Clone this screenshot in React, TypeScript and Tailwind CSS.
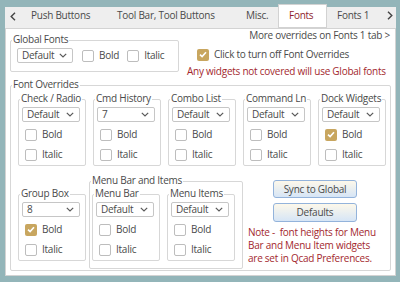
import type { ReactNode } from "react";

const Chevron = () => (
  <svg width="8" height="5" viewBox="0 0 8 5" className="shrink-0">
    <polyline points="0.8,0.8 4,4 7.2,0.8" fill="none" stroke="#5a5a5a" strokeWidth="1.2" />
  </svg>
);

function Combo({ value, w }: { value: string; w: string }) {
  return (
    <div className={`${w} h-[15px] flex items-center justify-between pl-[4px] pr-[5px] bg-white border border-[#c6c6c6] rounded-[2px] leading-[13px]`}>
      <span>{value}</span>
      <Chevron />
    </div>
  );
}

function Check({ label, checked = false }: { label: string; checked?: boolean }) {
  return (
    <div className="flex items-center gap-[5px] leading-[13px]">
      {checked ? (
        <div className="w-[12px] h-[12px] rounded-[2px] bg-[#c8a65f] flex items-center justify-center shrink-0">
          <svg width="8" height="7" viewBox="0 0 8 7">
            <polyline points="1,3.6 3.1,5.6 7,1.2" fill="none" stroke="#ffffff" strokeWidth="1.6" />
          </svg>
        </div>
      ) : (
        <div className="w-[12px] h-[12px] rounded-[2px] bg-white border border-[#bdbdbd] shrink-0" />
      )}
      <span className="whitespace-nowrap">{label}</span>
    </div>
  );
}

function Group({ title, className, children }: { title: string; className: string; children?: ReactNode }) {
  return (
    <div className={`border border-[#d7d7d7] rounded-[2px] flex flex-col ${className}`}>
      <div className="-mt-[8px] ml-[1px] px-[1px] w-fit bg-white leading-[13px] whitespace-nowrap">{title}</div>
      {children}
    </div>
  );
}

function FontBox({ title, value, bold = false, className = "" }: { title: string; value: string; bold?: boolean; className?: string }) {
  return (
    <Group title={title} className={`w-[68px] h-[67px] shrink-0 ${className}`}>
      <div className="mt-[2px] px-[3px]">
        <Combo value={value} w="w-[58px]" />
      </div>
      <div className="mt-[6px] ml-[6px]">
        <Check label="Bold" checked={bold} />
      </div>
      <div className="mt-[7px] ml-[6px]">
        <Check label="Italic" />
      </div>
    </Group>
  );
}

function Tab({ label, w }: { label: string; w: string }) {
  return <div className={`${w} pl-[10px] pt-[2px] leading-[13px] whitespace-nowrap shrink-0`}>{label}</div>;
}

export default function App() {
  return (
    <div className="w-[400px] h-[282px] overflow-hidden bg-[#93b5b9] pt-[7px] pl-[5px] font-['Open_Sans',sans-serif] text-[10px] tracking-[-0.25px] text-[#4a4a4a]">
      <div className="w-[391px] h-[269px] flex flex-col">
        {/* tab bar */}
        <div className="h-[21px] bg-[#eeeeee] flex items-start shrink-0">
          <div className="w-[16px] h-[20px] flex items-center justify-center pb-[2px] shrink-0">
            <svg width="6" height="9" viewBox="0 0 6 9">
              <polyline points="5,0.8 1.2,4.5 5,8.2" fill="none" stroke="#444" strokeWidth="1.4" />
            </svg>
          </div>
          <Tab label="Push Buttons" w="w-[86px]" />
          <Tab label="Tool Bar, Tool Buttons" w="w-[129px]" />
          <Tab label="Misc." w="w-[42px]" />
          <div className="w-[49px] h-[24px] -mt-[3px] bg-white border border-[#d2d2d2] pl-[10px] pt-[4px] leading-[13px] text-[#8e1d2c] shrink-0">
            Fonts
          </div>
          <Tab label="Fonts 1" w="w-[56px]" />
          <div className="flex-1 flex justify-end pr-[3px] pt-[4px]">
            <svg width="6" height="9" viewBox="0 0 6 9">
              <polyline points="1,0.8 4.8,4.5 1,8.2" fill="none" stroke="#444" strokeWidth="1.4" />
            </svg>
          </div>
        </div>

        {/* page */}
        <div className="flex-1 bg-white border border-[#d3d3d3] pl-[4px] flex flex-col">
          <div className="h-[56px] flex shrink-0">
            <Group title="Global Fonts" className="w-[169px] h-[32px] mt-[11px] shrink-0">
              <div className="mt-[2px] pl-[6px] flex items-center">
                <Combo value="Default" w="w-[56px]" />
                <div className="ml-[9px]">
                  <Check label="Bold" />
                </div>
                <div className="ml-[8px]">
                  <Check label="Italic" />
                </div>
              </div>
            </Group>
            <div className="ml-[8px] flex-1 flex flex-col pr-[5px]">
              <div className="text-right leading-[12px] whitespace-nowrap">More overrides on Fonts 1 tab &gt;</div>
              <div className="mt-[7px] ml-[10px]">
                <Check label="Click to turn off Font Overrides" checked />
              </div>
              <div className="mt-[4px] leading-[13px] text-[#a3282e] whitespace-nowrap">
                Any widgets not covered will use Global fonts
              </div>
            </div>
          </div>

          <Group title="Font Overrides" className="w-[381px] h-[186px]">
            <div className="mt-[8px] pl-[7px] flex gap-[7px]">
              <FontBox title="Check / Radio" value="Default" />
              <FontBox title="Cmd History" value="7" />
              <FontBox title="Combo List" value="Default" />
              <FontBox title="Command Ln" value="Default" />
              <FontBox title="Dock Widgets" value="Default" bold />
            </div>
            <div className="mt-[15px] pl-[7px] flex items-start">
              <FontBox title="Group Box" value="8" bold className="mt-[13px]" />
              <Group title="Menu Bar and Items" className="w-[154px] h-[88px] ml-[3px] shrink-0">
                <div className="mt-[7px] pl-[2px] flex gap-[7px]">
                  <FontBox title="Menu Bar" value="Default" />
                  <FontBox title="Menu Items" value="Default" />
                </div>
              </Group>
              <div className="ml-[5px] -mt-[1px] flex flex-col">
                <button className="ml-[25px] w-[84px] h-[18px] rounded-[3px] border border-[#93b3db] bg-linear-to-b from-[#fdf8ea] to-[#d6e5f6] leading-[13px] text-[#4a4a4a]">
                  Sync to Global
                </button>
                <button className="ml-[25px] mt-[5px] w-[84px] h-[19px] rounded-[3px] border border-[#93b3db] bg-linear-to-b from-[#fdf8ea] to-[#d6e5f6] leading-[13px] text-[#4a4a4a]">
                  Defaults
                </button>
                <div className="mt-[4px] leading-[13px] text-[#a3282e] whitespace-pre">
                  {"Note -  font heights for Menu\nBar and Menu Item widgets\nare set in Qcad Preferences."}
                </div>
              </div>
            </div>
          </Group>
        </div>
      </div>
    </div>
  );
}
